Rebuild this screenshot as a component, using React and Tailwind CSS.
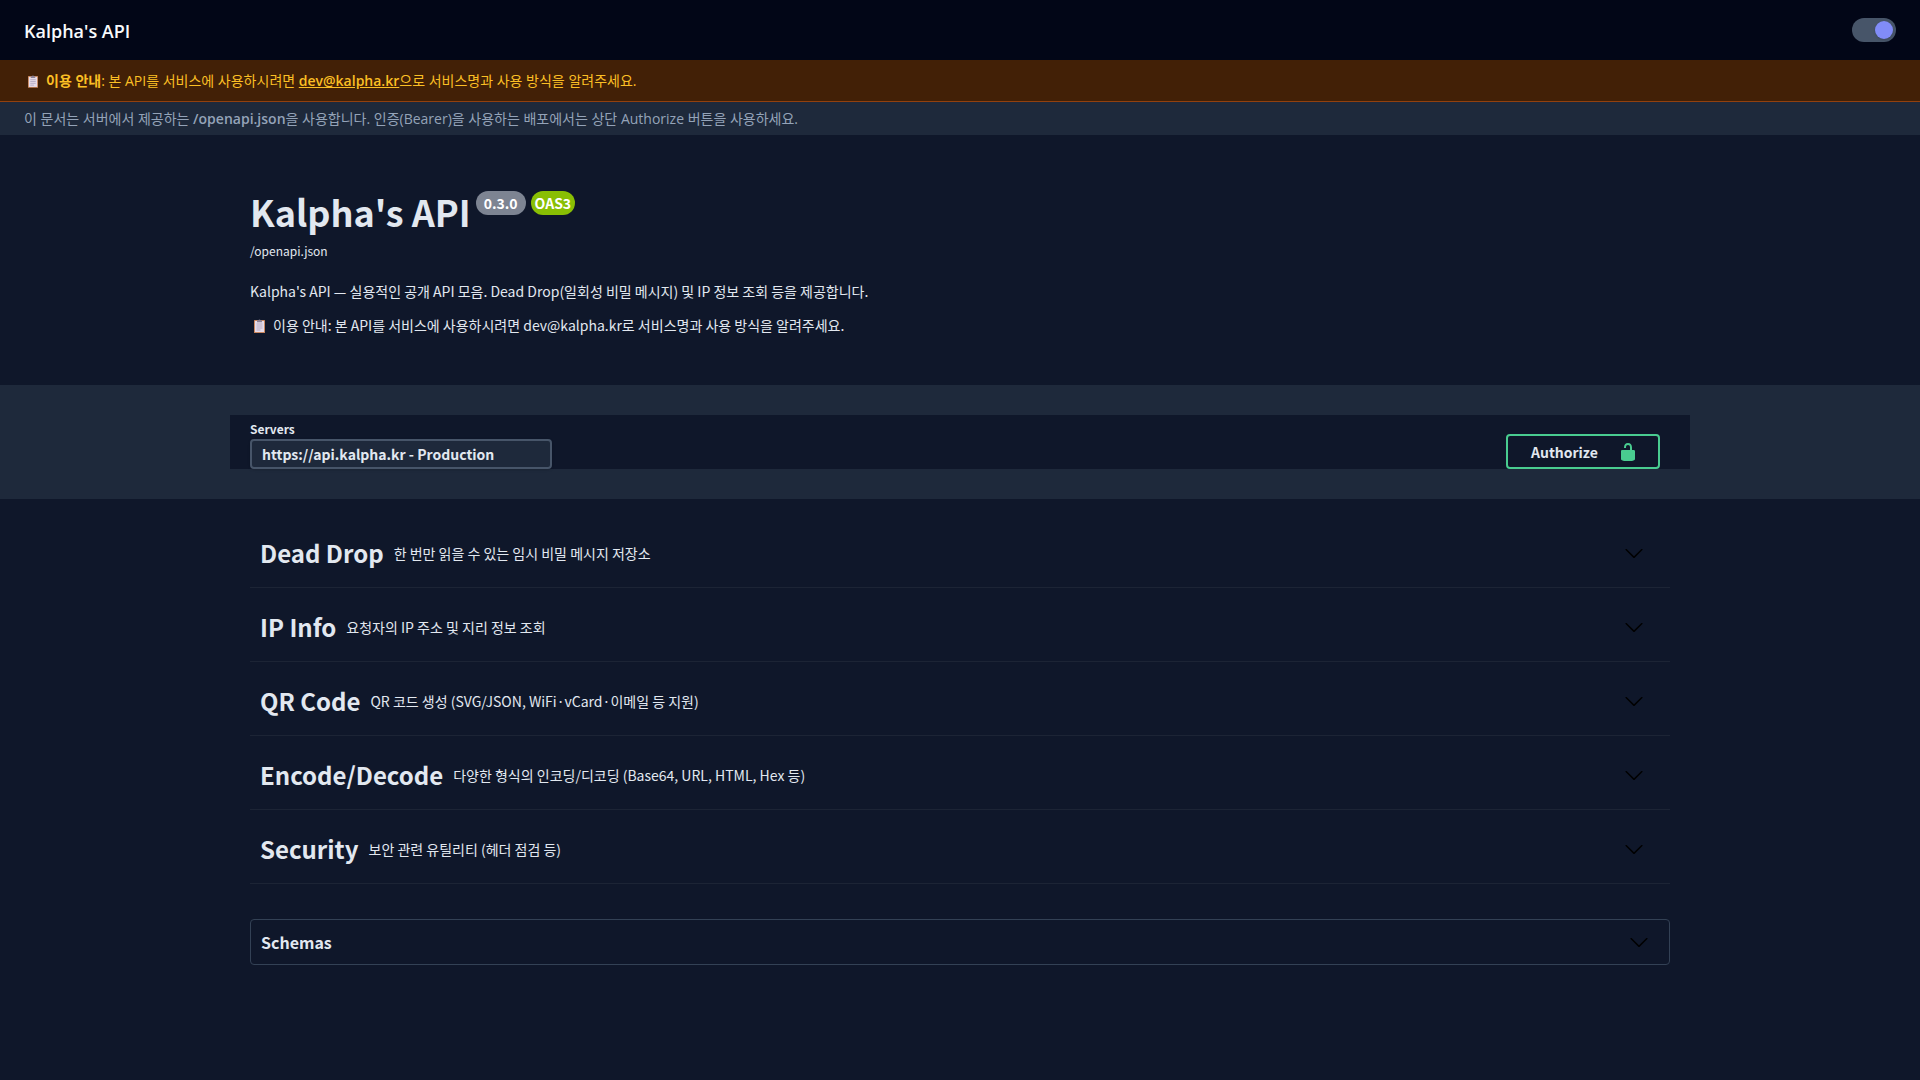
import { useState } from 'react'

const tags = [
    { name: 'Dead Drop', desc: '한 번만 읽을 수 있는 임시 비밀 메시지 저장소' },
    { name: 'IP Info', desc: '요청자의 IP 주소 및 지리 정보 조회' },
    { name: 'QR Code', desc: 'QR 코드 생성 (SVG/JSON, WiFi·vCard·이메일 등 지원)' },
    { name: 'Encode/Decode', desc: '다양한 형식의 인코딩/디코딩 (Base64, URL, HTML, Hex 등)' },
    { name: 'Security', desc: '보안 관련 유틸리티 (헤더 점검 등)' },
]

function Clipboard({ className }) {
    return (
        <svg viewBox="0 0 11 14" className={className} aria-hidden="true">
            <rect x="0" y="1" width="11" height="13" rx="0.6" fill="#c9875f" />
            <path d="M1 2h9v11H1z" fill="#e6dcea" />
            <path d="M3 1.2h1.4a1.2 1.2 0 0 1 2.2 0H8v2H3z" fill="#8b8297" />
            <path d="M2.5 5h6M2.5 7h6M2.5 9h6M2.5 11h4" stroke="#aaa0bb" strokeWidth="0.8" />
        </svg>
    )
}

function Arrow() {
    return (
        <svg viewBox="0 0 20 20" className="size-5 shrink-0 fill-black" aria-hidden="true">
            <path d="M17.418 6.109c.272-.268.709-.268.979 0s.271.701 0 .969l-7.908 7.83c-.27.268-.707.268-.979 0l-7.908-7.83c-.27-.268-.27-.701 0-.969.271-.268.709-.268.979 0L10 13.25l7.418-7.141z" />
        </svg>
    )
}

export default function App() {
    const [dark, setDark] = useState(true)

    return (
        <div className="min-h-screen bg-[#0f172a] font-['Noto_Sans_CJK_KR',sans-serif] text-[#e2e8f0]">
            <div className="font-['Open_Sans','Noto_Sans_CJK_KR',sans-serif]">
                {/* Top bar */}
                <header className="flex h-15 items-center justify-between bg-[#020617] px-6">
                    <h1 className="pt-0.5 text-lg font-semibold text-[#f8fafc]">Kalpha's API</h1>
                    <label className="flex h-6 w-11 cursor-pointer items-center rounded-full bg-[#475569] p-[3px]">
                        <input
                            type="checkbox"
                            role="switch"
                            aria-label="다크 모드"
                            className="peer sr-only"
                            checked={dark}
                            onChange={e => setDark(e.target.checked)}
                        />
                        <span className="size-[18px] rounded-full bg-[#818cf8] shadow peer-checked:ml-auto" />
                    </label>
                </header>
                {/* Notices */}
                <p className="border-b border-[#92400e] bg-[#422006] px-6 py-[10px] text-sm/[21px] text-[#fbbf24]">
                    <Clipboard className="mr-2 ml-1 inline h-[13px] w-[10px] align-[-2px]" />
                    <strong className="font-semibold">이용 안내</strong>: 본 API를 서비스에 사용하시려면{' '}
                    <a href="mailto:dev@kalpha.kr" className="font-semibold underline">dev@kalpha.kr</a>
                    으로 서비스명과 사용 방식을 알려주세요.
                </p>
                <p className="bg-[#1e293b] px-6 py-2 text-sm/[17px] text-[#94a3b8]">
                    이 문서는 서버에서 제공하는 <strong className="font-semibold">/openapi.json</strong>을 사용합니다.
                    인증(Bearer)을 사용하는 배포에서는 상단 Authorize 버튼을 사용하세요.
                </p>
            </div>

            {/* Info */}
            <section className="mx-auto max-w-[1460px] px-5 pt-[50px] pb-12">
                <div className="flex items-start gap-[5px]">
                    <h2 className="text-4xl/13 font-bold">Kalpha's API</h2>
                    <span className="mt-[6px] rounded-full bg-[#7d8492] px-2 text-sm/6 font-bold text-white">0.3.0</span>
                    <span className="mt-[6px] rounded-full bg-[#89bf04] px-1 text-sm/6 font-bold text-white">OAS3</span>
                </div>
                <a href="/openapi.json" className="block text-xs/7">/openapi.json</a>
                <p className="mt-[14px] text-sm/6">
                    Kalpha's API — 실용적인 공개 API 모음. Dead Drop(일회성 비밀 메시지) 및 IP 정보 조회 등을 제공합니다.
                </p>
                <p className="mt-[10px] text-sm/6">
                    <Clipboard className="mr-2 ml-1 inline h-[14px] w-[11px] align-[-2px]" />
                    이용 안내: 본 API를 서비스에 사용하시려면 dev@kalpha.kr로 서비스명과 사용 방식을 알려주세요.
                </p>
            </section>

            {/* Servers */}
            <section className="bg-[#1e293b] py-[30px]">
                <div className="mx-auto flex max-w-[1460px] items-end justify-between bg-[#0f172a] pr-[30px] pl-5">
                    <div className="pt-1">
                        <label htmlFor="servers" className="block text-xs/5 font-bold">Servers</label>
                        <select
                            id="servers"
                            className="block h-[30px] w-[302px] appearance-none rounded border-2 border-[#475569] bg-[#1e293b] px-[10px] text-sm/6 font-bold shadow-sm"
                        >
                            <option>https://api.kalpha.kr - Production</option>
                        </select>
                    </div>
                    <button className="flex h-[35px] items-center rounded border-2 border-[#49cc90] pr-5 pl-[23px] text-sm font-bold">
                        <span className="pr-5">Authorize</span>
                        <svg viewBox="0 0 20 20" className="size-5 fill-[#49cc90]" aria-hidden="true">
                            <path d="M15.8 8H14V5.6C14 2.703 12.665 1 10 1 7.334 1 6 2.703 6 5.6V6h2v-.801C8 3.754 8.797 3 10 3c1.203 0 2 .754 2 2.199V8H4c-.553 0-1 .646-1 1.199V17c0 .549.428 1.139.951 1.307l1.197.387C5.672 18.861 6.55 19 7.1 19h5.8c.549 0 1.428-.139 1.951-.307l1.196-.387c.524-.167.953-.757.953-1.306V9.199C17 8.646 16.352 8 15.8 8z" />
                        </svg>
                    </button>
                </div>
            </section>

            {/* Tags */}
            <main className="mx-auto max-w-[1460px] px-5 pt-5 pb-10">
                {tags.map(tag => (
                    <button
                        key={tag.name}
                        className="mb-[5px] flex h-[69px] w-full items-center border-b border-[#3b4151]/30 pr-[26px] pl-[10px] text-left"
                    >
                        <span className="text-2xl font-bold">{tag.name}</span>
                        <span className="flex-1 px-[10px] text-sm">{tag.desc}</span>
                        <Arrow />
                    </button>
                ))}
                {/* Schemas */}
                <button className="mt-[35px] flex h-[46px] w-full items-center justify-between rounded border border-[#334155] pr-5 pl-[10px] text-base font-bold">
                    Schemas
                    <Arrow />
                </button>
            </main>
        </div>
    )
}
